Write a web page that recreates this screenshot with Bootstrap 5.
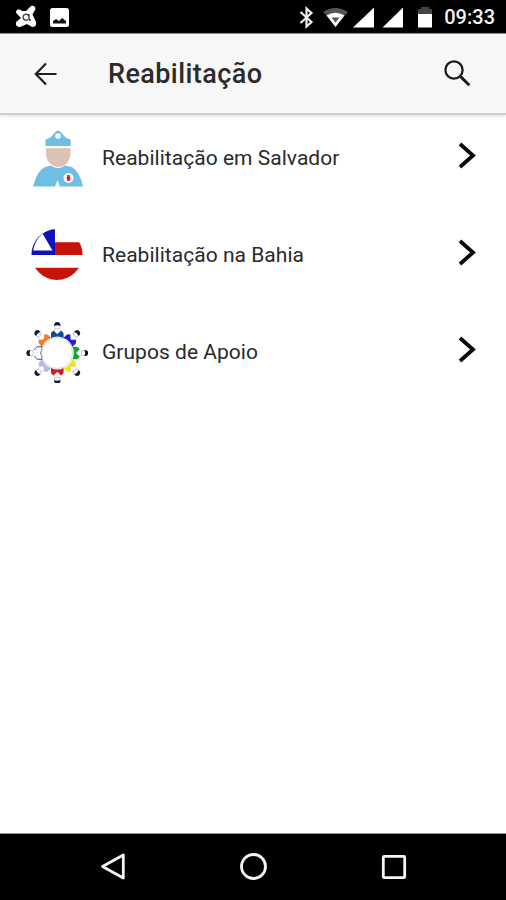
<!DOCTYPE html>
<html lang="pt-BR">
<head>
<meta charset="utf-8">
<meta name="viewport" content="width=device-width, initial-scale=1">
<title>Reabilitação</title>
<link href="https://cdn.jsdelivr.net/npm/bootstrap@5.3.0/dist/css/bootstrap.min.css" rel="stylesheet">
<style>
body{font-family:Roboto,"Liberation Sans",sans-serif;color:#1c1c1c}
svg{display:block;flex-shrink:0}
.status-bar{height:34px;background:#000;border-bottom:1px solid #777;padding:0 11px 0 13px}
.clock{font-size:20px;font-weight:500;line-height:34px;color:#f4f4f4;margin-left:11px;padding-top:1px;letter-spacing:0}
.app-bar{height:81px;background:#f7f7f7;border-bottom:2px solid #cfcfcf;box-shadow:0 1px 3px #ddd;padding:1px 33px 0}
.app-title{font-size:27px;font-weight:500;line-height:32px;margin:0 0 0 48px;color:#2b2b2b;letter-spacing:.42px}
.menu-list{padding-top:12px;gap:35px}
.menu-item{height:62px;padding:0 29px 0 26px;color:#2a2a2a;text-decoration:none}
.item-text{font-size:21px;line-height:30px;margin-left:14px;letter-spacing:.03px}
.chevron{margin-bottom:2px}
.nav-keys{height:67px;background:#000;border-top:1px solid #999;padding:0 97px 0 99px}
</style>
</head>
<body class="bg-white">
<div class="d-flex flex-column vh-100 overflow-hidden">
<div class="status-bar d-flex align-items-center">
  <svg width="58" height="34" viewBox="0 0 58 34">
    <path d="M4 10Q6 8 9 11L13 11L18 6Q22 5 22.500 9L19.500 14.500L23 22Q24 27 19 27L14 24L7 27Q2 27 3 22L8 18L4 14Q2 12 4 10Z" fill="#fff"/>
    <path d="M16 14v6M16 17a3 3 0 1 0-1 2.400M16 20h2" fill="none" stroke="#333" stroke-width="1.300"/>
    <rect x="37" y="8" width="19" height="19" rx="2.500" fill="#fff"/>
    <path d="M40 23.500V21l3-2 3 2 3-3 4 3v2.500Z" fill="#111"/>
  </svg>
  <svg class="ms-auto" width="135" height="34" viewBox="297 0 135 34">
    <path d="M299.500 12L310.500 22L305.500 26.500V8.500L310.500 13L299.500 23" fill="none" stroke="#eee" stroke-width="2.200"/>
    <path d="M322 12Q334 4 347 12L342 17Q334 11 327 17Z" fill="#555"/>
    <path d="M325.500 15.500Q334 10 343.500 15.500L334.500 27Z" fill="#fff"/>
    <path d="M330.500 17.500h8l-4 5Z" fill="#555"/>
    <path d="M352 27.500L373 7.500V27.500ZM381.500 27.500L402 7.500V27.500Z" fill="#fff"/>
    <path d="M417 9h3V7h8v2h3v5h-14Z" fill="#444"/>
    <path d="M417 14h14v13.500h-14Z" fill="#fff"/>
  </svg>
  <span class="clock">09:33</span>
</div>
<header class="app-bar d-flex align-items-center">
  <svg width="27" height="26" viewBox="0 0 27 26"><path d="M23.500 13H3M13 2.500L2.800 13L13 23.500" fill="none" stroke="#202020" stroke-width="2.200"/></svg>
  <h1 class="app-title">Reabilitação</h1>
  <svg class="ms-auto" width="30" height="30" viewBox="0 0 30 30"><circle cx="11" cy="11" r="8.600" fill="none" stroke="#1c1c1c" stroke-width="2.300"/><path d="M17.500 17.500L26.300 26.300" stroke="#1c1c1c" stroke-width="3"/></svg>
</header>
<main class="menu-list d-flex flex-column flex-grow-1">
  <a class="menu-item d-flex align-items-center" href="#">
    <svg width="62" height="62" viewBox="0 0 62 62">
      <path d="M19.500 19V12.500Q25 11 27.500 7Q31.700-.2 36.500 7Q39 11 44.700 12.500V19Z" fill="#6fbee4"/>
      <circle cx="32" cy="9" r="2.800" fill="#fff"/>
      <path d="M20 21.300H44.500V27Q44 34 39 38Q32 42 26 38Q20 34 20 27Z" fill="#dcc2b5"/>
      <path d="M7 59.500Q11 44 19 40L25 38.500Q32 43.500 39 38.500L46 40Q54 45 57 59.500H34L31.500 53L29 59.500Z" fill="#6fbee4"/>
      <circle cx="42.500" cy="51" r="5" fill="#fff"/>
      <path d="M42.500 48v6M40.700 51h3.600" stroke="#c8202c" stroke-width="2.400"/>
    </svg>
    <span class="item-text">Reabilitação em Salvador</span>
    <svg class="chevron ms-auto" width="20" height="30" viewBox="0 0 20 30"><path d="M3 2L16 13.500L3 25" fill="none" stroke="#080808" stroke-width="3.800"/></svg>
  </a>
  <a class="menu-item d-flex align-items-center" href="#">
    <svg width="62" height="62" viewBox="0 0 62 62">
      <clipPath id="disc"><circle cx="31" cy="30.500" r="25.500"/></clipPath>
      <g clip-path="url(#disc)">
        <path d="M5 4H29V31H5Z" fill="#1010bd"/>
        <path d="M16.500 9.500L26.500 26.500H7.200Q9 16 16.500 9.500Z" fill="#fff"/>
        <path d="M29 18.300H57V31H29ZM5 43.700H57V57H5Z" fill="#c71208"/>
      </g>
    </svg>
    <span class="item-text">Reabilitação na Bahia</span>
    <svg class="chevron ms-auto" width="20" height="30" viewBox="0 0 20 30"><path d="M3 2L16 13.500L3 25" fill="none" stroke="#080808" stroke-width="3.800"/></svg>
  </a>
  <a class="menu-item d-flex align-items-center" href="#">
    <svg width="62" height="62" viewBox="0 0 62 62">
      <defs><g id="person">
        <path d="M25 17V12.500Q26 9 31.300 9T37.600 12.500V17Q31 14 25 17Z"/>
        <path d="M28 10l3.300 3L34.600 10l-1-3h-4.600Z" fill="#fff" stroke="#b8c3d2" stroke-width=".5"/>
      </g>
      <g id="head">
        <circle cx="31.300" cy="5" r="3" fill="#fff" stroke="#a5afbd" stroke-width=".6"/>
        <path d="M28.200 5Q28 1 31.300 1T34.400 5Q31.300 3.500 28.200 5Z" fill="#101a2c"/>
      </g></defs>
      <use href="#person" fill="#104d8d"/>
      <use href="#person" fill="#1c1cd0" transform="rotate(45 31.300 32)"/>
      <use href="#person" fill="#16a337" transform="rotate(90 31.300 32)"/>
      <use href="#person" fill="#f0e60a" transform="rotate(135 31.300 32)"/>
      <use href="#person" fill="#d81726" transform="rotate(180 31.300 32)"/>
      <use href="#person" fill="#b9b9e2" transform="rotate(225 31.300 32)"/>
      <use href="#person" fill="#fff" stroke="#24558c" stroke-width="1" transform="rotate(270 31.300 32)"/>
      <use href="#person" fill="#f47920" transform="rotate(315 31.300 32)"/>
      <use href="#head"/>
      <use href="#head" transform="rotate(45 31.300 32)"/>
      <use href="#head" transform="rotate(90 31.300 32)"/>
      <use href="#head" transform="rotate(135 31.300 32)"/>
      <use href="#head" transform="rotate(180 31.300 32)"/>
      <use href="#head" transform="rotate(225 31.300 32)"/>
      <use href="#head" transform="rotate(270 31.300 32)"/>
      <use href="#head" transform="rotate(315 31.300 32)"/>
      <circle cx="31" cy="32" r="15.500" fill="#fff" stroke="#c9ced4" stroke-width=".8"/>
    </svg>
    <span class="item-text">Grupos de Apoio</span>
    <svg class="chevron ms-auto" width="20" height="30" viewBox="0 0 20 30"><path d="M3 2L16 13.500L3 25" fill="none" stroke="#080808" stroke-width="3.800"/></svg>
  </a>
</main>
<nav class="nav-keys d-flex align-items-center justify-content-between">
  <svg width="28" height="30" viewBox="0 0 28 30"><path d="M24.300 3V26L3.500 14.500Z" fill="none" stroke="#f4f4f4" stroke-width="2.800" stroke-linejoin="round"/></svg>
  <svg width="30" height="30" viewBox="0 0 30 30"><circle cx="15.500" cy="14.500" r="12" fill="none" stroke="#f4f4f4" stroke-width="2.800"/></svg>
  <svg width="30" height="30" viewBox="0 0 30 30"><rect x="4.300" y="4.300" width="21.400" height="21.400" rx="1" fill="none" stroke="#f4f4f4" stroke-width="2.800"/></svg>
</nav>
</div>
<script src="https://cdn.jsdelivr.net/npm/bootstrap@5.3.0/dist/js/bootstrap.bundle.min.js"></script>
</body>
</html>
